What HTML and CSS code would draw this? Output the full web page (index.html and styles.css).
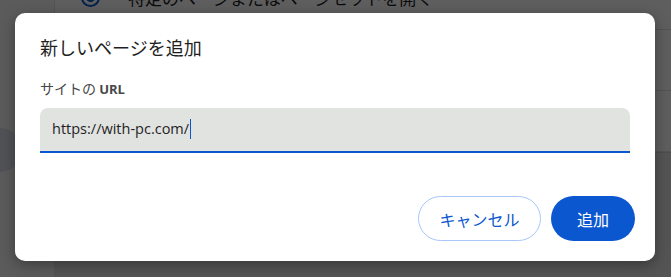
FILE: index.html
```html
<!DOCTYPE html>
<html lang="ja">
<head>
<meta charset="utf-8">
<link rel="stylesheet" href="styles.css">
</head>
<body>
<div class="page">
  <div class="side"><div class="blob"></div></div>
  <div class="main">
    <div class="card">
      <div class="row row-first">
        <span class="radio"><span class="dot"></span></span>
        <span class="row-text">特定のページまたはページセットを開く</span>
      </div>
      <div class="row"></div>
      <div class="row"></div>
    </div>
  </div>
</div>
<div class="scrim"></div>
<div class="dialog" role="dialog">
  <h1 class="title">新しいページを追加</h1>
  <label class="label">サイトの <b>URL</b></label>
  <div class="field">
    <span class="value">https://with-pc.com/</span><span class="caret"></span>
  </div>
  <div class="actions">
    <button class="btn btn-cancel">キャンセル</button>
    <button class="btn btn-add">追加</button>
  </div>
</div>
</body>
</html>
```
FILE: styles.css
```css
* { box-sizing: border-box; }
html, body { margin: 0; padding: 0; }
body {
  width: 671px;
  height: 277px;
  overflow: hidden;
  position: relative;
  background: #e4e4e4;
  font-family: "Open Sans", "Noto Sans CJK JP", sans-serif;
}
.page {
  display: flex;
  height: 277px;
}
.side {
  width: 55px;
  background: #f6f6f6;
  position: relative;
  border-right: 1px solid #e2e2e2;
}
.blob {
  position: absolute;
  left: -22px;
  top: 128px;
  width: 44px;
  height: 44px;
  border-radius: 50%;
  background: #d8dde8;
}
.main {
  flex: 1;
}
.card {
  margin-top: -31px;
  background: #ffffff;
  height: 184px;
  border-bottom: 2px solid #d0d0d0;
}
.row {
  height: 61px;
  border-bottom: 1px solid #e0e0e0;
  display: flex;
  align-items: center;
}
.row-first { padding-left: 26px; gap: 28px; }
.radio {
  width: 19px;
  height: 19px;
  border-radius: 50%;
  border: 2px solid #0b57d0;
  display: flex;
  align-items: center;
  justify-content: center;
  margin-top: -4px;
}
.dot { width: 9px; height: 9px; border-radius: 50%; background: #0b57d0; }
.row-text {
  margin-top: -4px;
  font-size: 17px;
  color: #1f1f1f;
  font-family: "Noto Sans CJK JP", sans-serif;
}
.scrim {
  position: absolute;
  inset: 0;
  background: rgba(0, 0, 0, 0.63);
}
.dialog {
  position: absolute;
  left: 15px;
  top: 13px;
  width: 640px;
  height: 248px;
  background: #ffffff;
  border-radius: 10px;
  box-shadow: 0 4px 14px rgba(0, 0, 0, 0.35);
  padding: 22px 25px 20px 25px;
  display: flex;
  flex-direction: column;
}
.title {
  margin: 0;
  font-size: 18px;
  line-height: 24px;
  font-weight: 400;
  color: #1f1f1f;
  font-family: "Noto Sans CJK JP", sans-serif;
}
.label {
  margin-top: 21px;
  font-size: 14px;
  line-height: 16px;
  color: #474747;
  font-family: "Noto Sans CJK JP", sans-serif;
}
.label b { font-family: "Open Sans", sans-serif; font-weight: 700; font-size: 13px; }
.field {
  margin-top: 11px;
  height: 45px;
  background: #e1e3e1;
  border-radius: 8px 8px 0 0;
  border-bottom: 2px solid #0b57d0;
  padding: 0 12px 2px;
  display: flex;
  align-items: center;
}
.value {
  font-size: 14.5px;
  color: #1f1f1f;
}
.caret {
  width: 1px;
  height: 20px;
  background: #0b57d0;
  margin-left: 1px;
}
.actions {
  margin-top: auto;
  display: flex;
  justify-content: flex-end;
  gap: 10px;
  margin-right: -5px;
}
.btn {
  height: 45px;
  border-radius: 23px;
  font-size: 16px;
  font-family: "Noto Sans CJK JP", sans-serif;
  padding: 0;
  cursor: pointer;
}
.btn-cancel {
  width: 123px;
  background: #ffffff;
  border: 1px solid #a8c7fa;
  color: #0b57d0;
}
.btn-add {
  width: 84px;
  background: #0b57d0;
  border: none;
  color: #ffffff;
}
```
